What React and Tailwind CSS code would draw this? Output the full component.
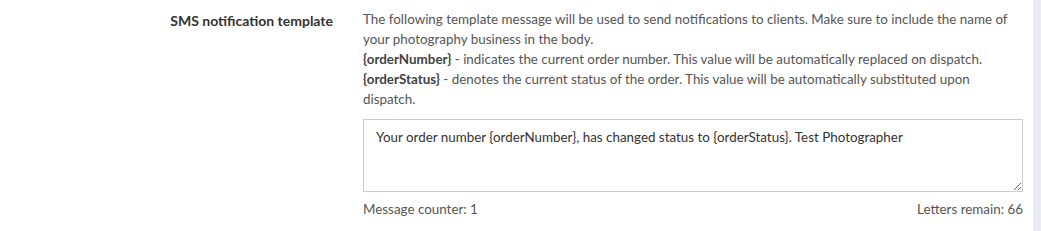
export default function App() {
  return (
    <div className="flex w-[1041px] h-[231px] bg-white">
      <div className="w-[1033px] flex pt-[9px] text-[13.4px] leading-[20px] font-['Lato','Noto_Sans',sans-serif]">
        <div className="w-[333px] shrink-0 text-right font-bold text-[14px] text-[#333333] pt-[2px]">
          SMS notification template
        </div>
        <div className="w-[660px] ml-[30px] text-[#555555]">
          <p className="whitespace-nowrap">
            The following template message will be used to send notifications to clients. Make sure to include the name of
            <br />
            your photography business in the body.
          </p>
          <p className="whitespace-nowrap">
            <b className="text-[#444444]">{'{orderNumber}'}</b> - indicates the current order number. This value will be automatically replaced on dispatch.
          </p>
          <p className="whitespace-nowrap">
            <b className="text-[#444444]">{'{orderStatus}'}</b> - denotes the current status of the order. This value will be automatically substituted upon
            <br />
            dispatch.
          </p>
          <textarea
            className="block w-full h-[73px] mt-[10px] border border-[#cccccc] px-[12px] py-[7px] text-[#333333] outline-none resize-y"
            defaultValue="Your order number {orderNumber}, has changed status to {orderStatus}. Test Photographer"
          />
          <div className="flex justify-between mt-[7px] text-[#555555]">
            <span>Message counter: 1</span>
            <span>Letters remain: 66</span>
          </div>
        </div>
      </div>
      <div className="flex-1 bg-[#e9edf3]" />
    </div>
  )
}
